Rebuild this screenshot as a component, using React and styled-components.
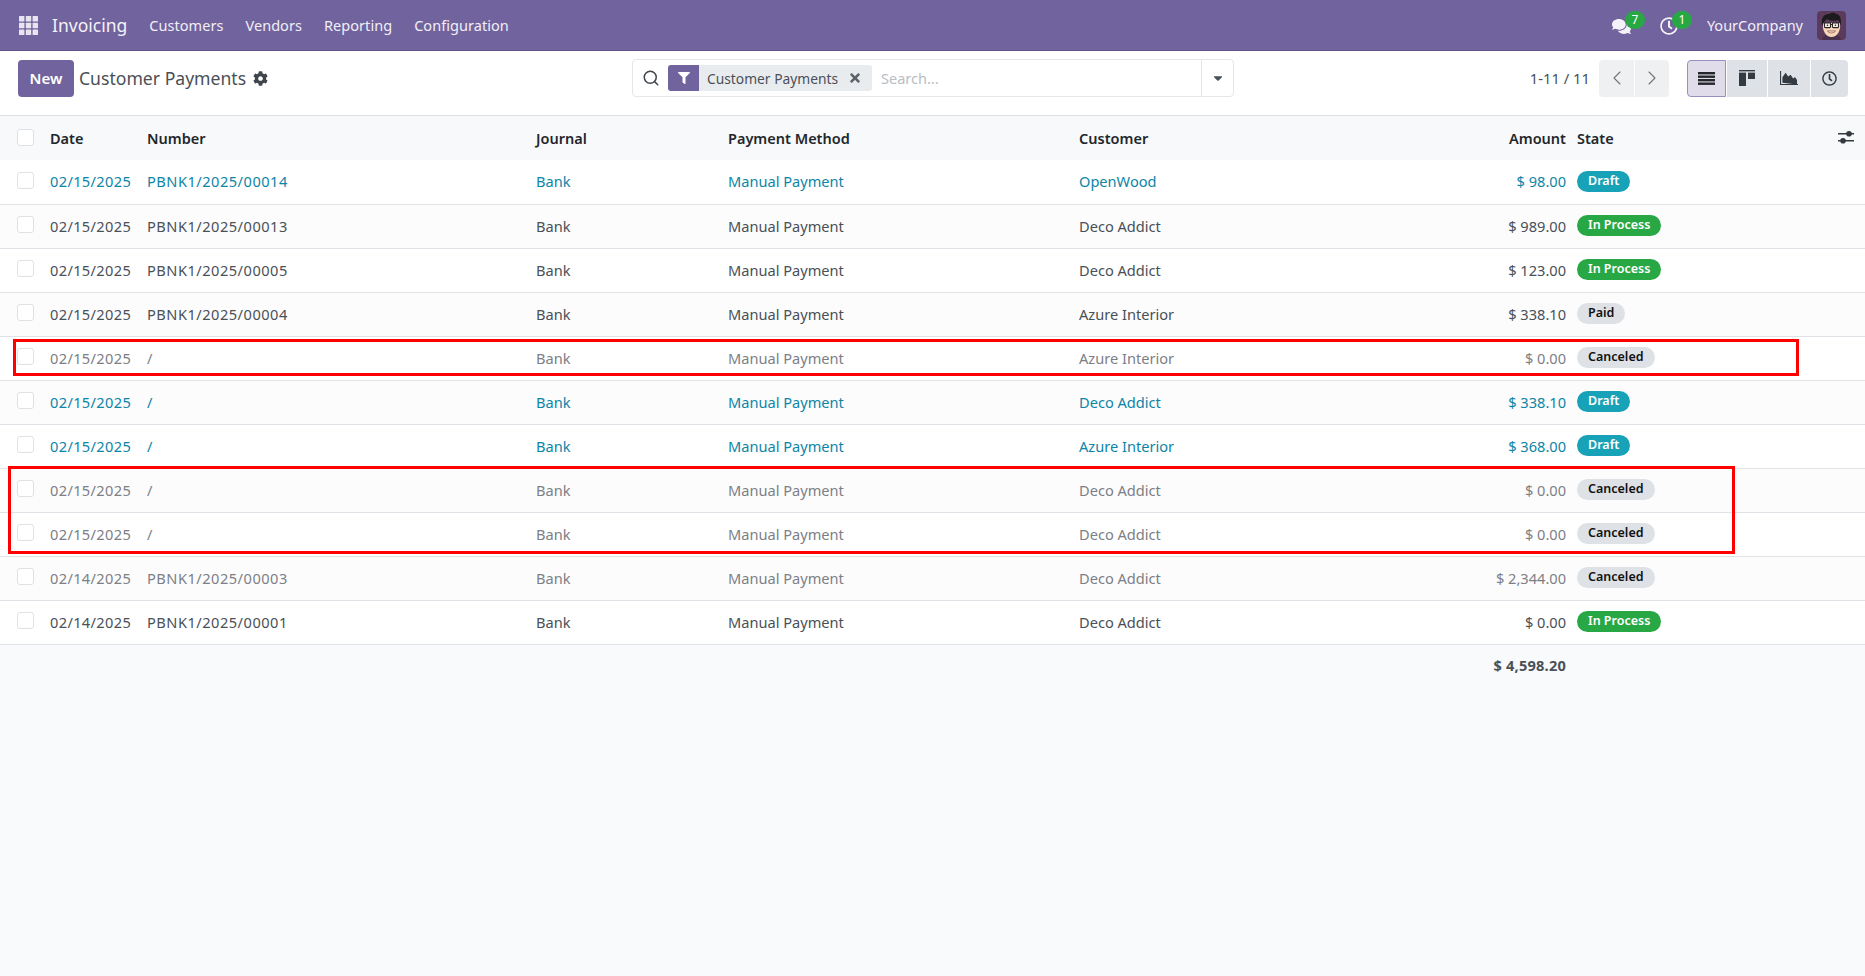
import React from 'react';
import styled, { createGlobalStyle } from 'styled-components';
import { FaCog, FaFilter, FaCaretDown, FaComments, FaRegClock, FaTimes } from 'react-icons/fa';
import { Search, ChevronLeft, ChevronRight } from 'lucide-react';

const GlobalStyle = createGlobalStyle`
	html, body {
		margin: 0;
		padding: 0;
		height: 100%;
		background: #f9fafb;
		font-family: "Noto Sans", "Liberation Sans", sans-serif;
		font-size: 15px;
		color: #495057;
	}
`;

const Page = styled.div`
	position: relative;
	min-height: 976px;
	background: #f9fafb;
`;

const NavBar = styled.header`
	display: flex;
	align-items: center;
	height: 50px;
	padding: 0 19px 0 19px;
	background: #71639e;
	color: #fff;
	border-bottom: 1px solid #5f5389;
	box-sizing: content-box;
`;

const AppName = styled.span`
	font-size: 17.5px;
	margin: 0 22px 0 14px;
	color: #f4f2f8;
`;

const NavLink = styled.span`
	font-size: 14.5px;
	margin-right: 22px;
	letter-spacing: 0.05px;
	color: #f1eff6;
`;

const NavRight = styled.div`
	display: flex;
	align-items: center;
	margin-left: auto;
`;

const IconSlot = styled.span`
	position: relative;
	display: flex;
	align-items: center;
	margin-right: ${props => props.$gap}px;
	top: 1px;
`;

const CountBadge = styled.span`
	position: absolute;
	top: -6px;
	left: ${props => props.$left}px;
	width: 20px;
	height: 18px;
	border-radius: 9px;
	background: #28a745;
	color: #fff;
	font-size: 12px;
	line-height: 17px;
	text-align: center;
`;

const CompanyName = styled.span`
	font-size: 14.5px;
	margin-right: 14px;
	color: #f1eff6;
`;

const ControlPanel = styled.div`
	display: grid;
	grid-template-columns: 1fr 602px 1fr;
	align-items: center;
	height: 65px;
	padding: 0 17px 10px 18px;
	box-sizing: border-box;
	background: #fff;
	border-bottom: 1px solid #dee2e6;
`;

const Left = styled.div`
	display: flex;
	align-items: center;
`;

const NewButton = styled.button`
	width: 56px;
	height: 37px;
	border: 0;
	border-radius: 4px;
	background: #71639e;
	color: #fff;
	font: 600 15px "Noto Sans", sans-serif;
`;

const Title = styled.span`
	font-size: 17.6px;
	margin: 0 7px 0 5px;
	color: #495057;
`;

const SearchBox = styled.div`
	display: flex;
	align-items: center;
	height: 38px;
	box-sizing: border-box;
	border: 1px solid #e4e7ea;
	border-radius: 4px;
	padding-left: 9px;
`;

const Facet = styled.span`
	display: flex;
	align-items: center;
	height: 26px;
	margin-left: 8px;
	border-radius: 3px;
	background: #e9ecef;
	font-size: 13.8px;
`;

const FacetIcon = styled.span`
	display: flex;
	align-items: center;
	justify-content: center;
	width: 31px;
	height: 26px;
	margin-right: 8px;
	border-radius: 3px 0 0 3px;
	background: #71639e;
	color: #fff;
`;

const FacetClose = styled.span`
	display: flex;
	margin: 0 10px 0 10px;
	color: #5b6168;
`;

const Placeholder = styled.span`
	flex: 1;
	margin-left: 9px;
	font-size: 14.5px;
	color: #b7bec6;
`;

const DropToggle = styled.span`
	display: flex;
	align-items: center;
	justify-content: center;
	width: 31px;
	height: 36px;
	border-left: 1px solid #e4e7ea;
	color: #495057;
`;

const Right = styled.div`
	display: flex;
	align-items: center;
	justify-content: flex-end;
`;

const PagerText = styled.span`
	font-size: 14.8px;
	margin-right: 9px;
	color: #495057;
`;

const ButtonGroup = styled.div`
	display: flex;
	gap: 1px;
	margin-right: ${props => props.$gap || 0}px;
`;

const SquareBtn = styled.span`
	display: flex;
	align-items: center;
	justify-content: center;
	box-sizing: border-box;
	width: ${props => props.$w}px;
	height: 37px;
	background: ${props => props.$light ? '#eff0f2' : '#dee1e5'};
	color: ${props => props.$light ? '#6e7479' : '#333a41'};
	&:first-child { border-radius: 4px 0 0 4px; }
	&:last-child { border-radius: 0 4px 4px 0; }
`;

const ActiveBtn = styled(SquareBtn)`
	background: #e0dcea;
	border: 1px solid #9a8dbf;
	color: #23272c;
`;

const Table = styled.table`
	width: 100%;
	table-layout: fixed;
	border-collapse: collapse;
`;

const HeadRow = styled.tr`
	height: 44px;
	background: #f8f9fa;
`;

const Th = styled.th`
	padding: 0;
	padding-right: ${props => props.$pr || 0}px;
	text-align: ${props => props.$right ? 'right' : 'left'};
	font-size: 14.5px;
	font-weight: 600;
	color: #22272c;
`;

const Row = styled.tr`
	height: 44px;
	background: ${props => props.$odd ? '#fcfcfd' : '#fff'};
	border-bottom: 1px solid #dee2e6;
	color: ${props => props.$tone === 'info' ? '#0d85a6' : props.$tone === 'muted' ? '#7c8086' : '#495057'};
`;

const Td = styled.td`
	padding: 0 ${props => props.$pr || 0}px 1px 0;
	text-align: ${props => props.$right ? 'right' : 'left'};
	font-size: 14.6px;
	white-space: nowrap;
`;

const NumberCell = styled(Td)`
	letter-spacing: ${props => props.$ls}px;
`;

const TotalCell = styled(Td)`
	height: 40px;
	font-weight: 700;
	letter-spacing: 0.2px;
	color: #495057;
`;

const Check = styled.span`
	display: block;
	width: 15px;
	height: 15px;
	margin: -2px 0 0 17px;
	background: #fff;
	border: 1px solid #dee2e6;
	border-radius: 3px;
`;

const badgeColors = {
	Draft: ['#17a2b8', '#fff'],
	'In Process': ['#28a745', '#fff'],
	Paid: ['#dee2e6', '#111'],
	Canceled: ['#dee2e6', '#111'],
};

const Badge = styled.span`
	display: inline-block;
	position: relative;
	top: -1px;
	height: 21px;
	line-height: 20px;
	padding: 0 11px;
	border-radius: 11px;
	font-size: 12.5px;
	font-weight: 600;
	background: ${props => badgeColors[props.$state][0]};
	color: ${props => badgeColors[props.$state][1]};
`;

const Annotation = styled.div`
	position: absolute;
	left: ${props => props.$x}px;
	top: ${props => props.$y}px;
	width: ${props => props.$w}px;
	height: ${props => props.$h}px;
	box-sizing: border-box;
	border: 3px solid #f00;
	pointer-events: none;
`;

const AppsIcon = () => (
	<svg width="19" height="19" viewBox="0 0 19 19" fill="#e8e5f0">
		{[0, 6.8, 13.6].map(y => [0, 6.8, 13.6].map(x => (
			<rect key={`${x}-${y}`} x={x} y={y} width="5.4" height="5.4" rx="0.5" />
		)))}
	</svg>
);

const ListIcon = () => (
	<svg width="17" height="13" viewBox="0 0 17 13" fill="currentColor">
		<rect y="0" width="17" height="2.4" />
		<rect y="3.5" width="17" height="2.4" />
		<rect y="7" width="17" height="2.4" />
		<rect y="10.5" width="17" height="2.4" />
	</svg>
);

const KanbanIcon = () => (
	<svg width="16" height="16" viewBox="0 0 16 16" fill="currentColor">
		<rect width="16" height="1.4" />
		<rect y="2.6" width="7" height="13.4" />
		<rect x="9" y="2.6" width="7" height="6.4" />
	</svg>
);

const AreaIcon = () => (
	<svg width="18" height="14" viewBox="0 0 18 14" fill="currentColor">
		<path d="M0 0h1.1v12.9H18V14H0z" />
		<path d="M2.4 11.8V6.2L5.6 1.8l2.6 3.6 2.4-1.6 2.5 3.6 1.9-1.4 2 3v4.6z" />
	</svg>
);

const SlidersIcon = () => (
	<svg width="16" height="14" viewBox="0 0 16 14" fill="#343a40">
		<rect y="3" width="16" height="1.5" />
		<circle cx="11" cy="3.7" r="2.8" />
		<rect y="10" width="16" height="1.5" />
		<circle cx="5" cy="10.7" r="2.8" />
	</svg>
);

const Avatar = () => (
	<svg width="29" height="29" viewBox="0 0 29 29">
		<rect width="29" height="29" rx="4" fill="#5c3a5c" />
		<path d="M5 29c1-5 5-6 9.5-6s8.500 1 9.500 6z" fill="#46304c" />
		<path d="M6 12c-1 8 3 14 8.500 14S24 20 23 12z" fill="#f6d5b8" />
		<path d="M5.500 15C3 8 7 2.500 12 3c3-2 6-1.500 7 0 4 0 6 5 4.500 12-.5-3-1.500-5-2.500-6-3 1.500-8 1-11-1-1.500 1.500-3.500 3-4.500 7z" fill="#1d1b1e" />
		<rect x="7.500" y="12" width="6" height="4.600" rx="0.800" fill="#fff" fillOpacity="0.55" stroke="#2a2528" strokeWidth="1.100" />
		<rect x="15.500" y="12" width="6" height="4.600" rx="0.800" fill="#fff" fillOpacity="0.55" stroke="#2a2528" strokeWidth="1.100" />
		<path d="M13.500 13.500h2" stroke="#2a2528" strokeWidth="1" />
		<circle cx="10.500" cy="14.300" r="0.800" fill="#222" />
		<circle cx="18.500" cy="14.300" r="0.800" fill="#222" />
		<path d="M10.500 20c2 2.500 6 2.500 8 0z" fill="#fff" stroke="#8a4a3a" strokeWidth="0.800" />
	</svg>
);

const payments = [
	{ date: '02/15/2025', number: 'PBNK1/2025/00014', customer: 'OpenWood', amount: '$ 98.00', state: 'Draft', tone: 'info' },
	{ date: '02/15/2025', number: 'PBNK1/2025/00013', customer: 'Deco Addict', amount: '$ 989.00', state: 'In Process' },
	{ date: '02/15/2025', number: 'PBNK1/2025/00005', customer: 'Deco Addict', amount: '$ 123.00', state: 'In Process' },
	{ date: '02/15/2025', number: 'PBNK1/2025/00004', customer: 'Azure Interior', amount: '$ 338.10', state: 'Paid' },
	{ date: '02/15/2025', number: '/', customer: 'Azure Interior', amount: '$ 0.00', state: 'Canceled', tone: 'muted' },
	{ date: '02/15/2025', number: '/', customer: 'Deco Addict', amount: '$ 338.10', state: 'Draft', tone: 'info' },
	{ date: '02/15/2025', number: '/', customer: 'Azure Interior', amount: '$ 368.00', state: 'Draft', tone: 'info' },
	{ date: '02/15/2025', number: '/', customer: 'Deco Addict', amount: '$ 0.00', state: 'Canceled', tone: 'muted' },
	{ date: '02/15/2025', number: '/', customer: 'Deco Addict', amount: '$ 0.00', state: 'Canceled', tone: 'muted' },
	{ date: '02/14/2025', number: 'PBNK1/2025/00003', customer: 'Deco Addict', amount: '$ 2,344.00', state: 'Canceled', tone: 'muted' },
	{ date: '02/14/2025', number: 'PBNK1/2025/00001', customer: 'Deco Addict', amount: '$ 0.00', state: 'In Process' },
];

export default function App() {
	return (
		<Page>
			<GlobalStyle />
			<NavBar>
				<AppsIcon />
				<AppName>Invoicing</AppName>
				<NavLink>Customers</NavLink>
				<NavLink>Vendors</NavLink>
				<NavLink>Reporting</NavLink>
				<NavLink>Configuration</NavLink>
				<NavRight>
					<IconSlot $gap={29}>
						<FaComments size={19} color="#f4f2f8" />
						<CountBadge $left={13}>7</CountBadge>
					</IconSlot>
					<IconSlot $gap={29}>
						<FaRegClock size={18} color="#f4f2f8" />
						<CountBadge $left={12}>1</CountBadge>
					</IconSlot>
					<CompanyName>YourCompany</CompanyName>
					<Avatar />
				</NavRight>
			</NavBar>
			<ControlPanel>
				<Left>
					<NewButton>New</NewButton>
					<Title>Customer Payments</Title>
					<FaCog size={15} color="#3f454b" />
				</Left>
				<SearchBox>
					<Search size={18} color="#3f454b" strokeWidth={2} />
					<Facet>
						<FacetIcon><FaFilter size={12} /></FacetIcon>
						Customer Payments
						<FacetClose><FaTimes size={14} /></FacetClose>
					</Facet>
					<Placeholder>Search...</Placeholder>
					<DropToggle><FaCaretDown size={14} /></DropToggle>
				</SearchBox>
				<Right>
					<PagerText>1-11 / 11</PagerText>
					<ButtonGroup $gap={18}>
						<SquareBtn $w={35} $light><ChevronLeft size={24} strokeWidth={1.1} /></SquareBtn>
						<SquareBtn $w={34} $light><ChevronRight size={24} strokeWidth={1.1} /></SquareBtn>
					</ButtonGroup>
					<ButtonGroup>
						<ActiveBtn $w={39}><ListIcon /></ActiveBtn>
						<SquareBtn $w={40}><KanbanIcon /></SquareBtn>
						<SquareBtn $w={42}><AreaIcon /></SquareBtn>
						<SquareBtn $w={37}><FaRegClock size={15} /></SquareBtn>
					</ButtonGroup>
				</Right>
			</ControlPanel>
			<Table>
				<colgroup>
					<col style={{ width: 50 }} />
					<col style={{ width: 97 }} />
					<col style={{ width: 389 }} />
					<col style={{ width: 192 }} />
					<col style={{ width: 351 }} />
					<col style={{ width: 321 }} />
					<col style={{ width: 177 }} />
					<col />
					<col style={{ width: 27 }} />
				</colgroup>
				<thead>
					<HeadRow>
						<Th><Check /></Th>
						<Th>Date</Th>
						<Th>Number</Th>
						<Th>Journal</Th>
						<Th>Payment Method</Th>
						<Th>Customer</Th>
						<Th $right $pr={11}>Amount</Th>
						<Th>State</Th>
						<Th><SlidersIcon /></Th>
					</HeadRow>
				</thead>
				<tbody>
					{payments.map((p, i) => (
						<Row key={i} $odd={i % 2 === 1} $tone={p.tone}>
							<Td><Check /></Td>
							<NumberCell $ls={0.35}>{p.date}</NumberCell>
							<NumberCell $ls={0.5}>{p.number}</NumberCell>
							<Td>Bank</Td>
							<Td>Manual Payment</Td>
							<Td>{p.customer}</Td>
							<Td $right $pr={11}>{p.amount}</Td>
							<Td><Badge $state={p.state}>{p.state}</Badge></Td>
							<Td />
						</Row>
					))}
				</tbody>
				<tfoot>
					<tr>
						<TotalCell colSpan={7} $right $pr={11}>$ 4,598.20</TotalCell>
						<TotalCell colSpan={2} />
					</tr>
				</tfoot>
			</Table>
			<Annotation $x={13} $y={339} $w={1786} $h={37} />
			<Annotation $x={8} $y={466} $w={1727} $h={88} />
		</Page>
	);
}
